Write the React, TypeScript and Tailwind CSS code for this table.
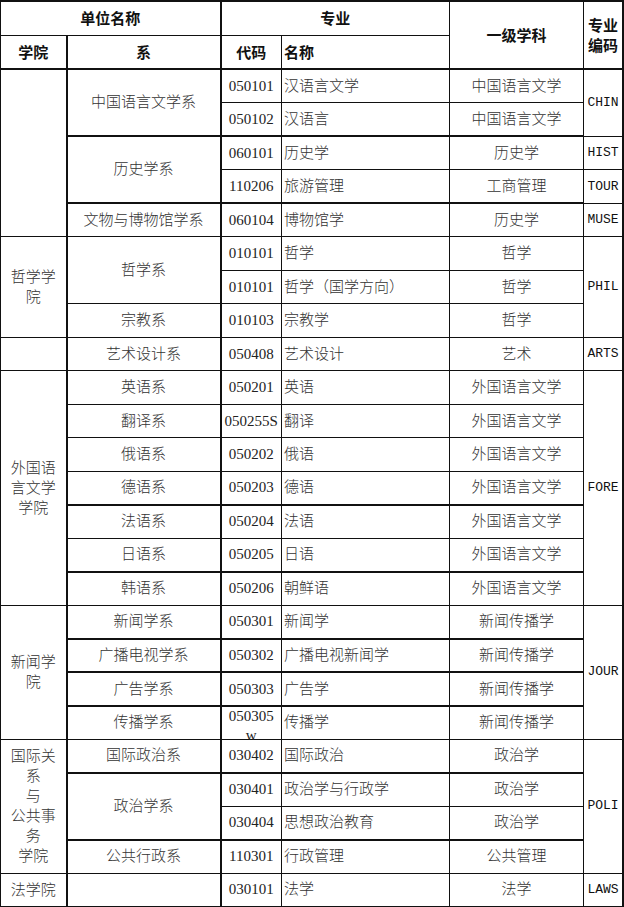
import React from 'react';
import clsx from 'clsx';

type Cell = { c: number; t?: React.ReactNode; rs?: number };

const br = (...lines: string[]) =>
  lines.map((l, i) => (
    <React.Fragment key={i}>
      {i > 0 && <br />}
      {l}
    </React.Fragment>
  ));

const rows: Cell[][] = [
  [{ c: 0, rs: 5 }, { c: 1, t: '中国语言文学系', rs: 2 }, { c: 2, t: '050101' }, { c: 3, t: '汉语言文学' }, { c: 4, t: '中国语言文学' }, { c: 5, t: 'CHIN', rs: 2 }],
  [{ c: 2, t: '050102' }, { c: 3, t: '汉语言' }, { c: 4, t: '中国语言文学' }],
  [{ c: 1, t: '历史学系', rs: 2 }, { c: 2, t: '060101' }, { c: 3, t: '历史学' }, { c: 4, t: '历史学' }, { c: 5, t: 'HIST' }],
  [{ c: 2, t: '110206' }, { c: 3, t: '旅游管理' }, { c: 4, t: '工商管理' }, { c: 5, t: 'TOUR' }],
  [{ c: 1, t: '文物与博物馆学系' }, { c: 2, t: '060104' }, { c: 3, t: '博物馆学' }, { c: 4, t: '历史学' }, { c: 5, t: 'MUSE' }],
  [{ c: 0, t: br('哲学学', '院'), rs: 3 }, { c: 1, t: '哲学系', rs: 2 }, { c: 2, t: '010101' }, { c: 3, t: '哲学' }, { c: 4, t: '哲学' }, { c: 5, t: 'PHIL', rs: 3 }],
  [{ c: 2, t: '010101' }, { c: 3, t: '哲学（国学方向）' }, { c: 4, t: '哲学' }],
  [{ c: 1, t: '宗教系' }, { c: 2, t: '010103' }, { c: 3, t: '宗教学' }, { c: 4, t: '哲学' }],
  [{ c: 0 }, { c: 1, t: '艺术设计系' }, { c: 2, t: '050408' }, { c: 3, t: '艺术设计' }, { c: 4, t: '艺术' }, { c: 5, t: 'ARTS' }],
  [{ c: 0, t: br('外国语', '言文学', '学院'), rs: 7 }, { c: 1, t: '英语系' }, { c: 2, t: '050201' }, { c: 3, t: '英语' }, { c: 4, t: '外国语言文学' }, { c: 5, t: 'FORE', rs: 7 }],
  [{ c: 1, t: '翻译系' }, { c: 2, t: '050255S' }, { c: 3, t: '翻译' }, { c: 4, t: '外国语言文学' }],
  [{ c: 1, t: '俄语系' }, { c: 2, t: '050202' }, { c: 3, t: '俄语' }, { c: 4, t: '外国语言文学' }],
  [{ c: 1, t: '德语系' }, { c: 2, t: '050203' }, { c: 3, t: '德语' }, { c: 4, t: '外国语言文学' }],
  [{ c: 1, t: '法语系' }, { c: 2, t: '050204' }, { c: 3, t: '法语' }, { c: 4, t: '外国语言文学' }],
  [{ c: 1, t: '日语系' }, { c: 2, t: '050205' }, { c: 3, t: '日语' }, { c: 4, t: '外国语言文学' }],
  [{ c: 1, t: '韩语系' }, { c: 2, t: '050206' }, { c: 3, t: '朝鲜语' }, { c: 4, t: '外国语言文学' }],
  [{ c: 0, t: br('新闻学', '院'), rs: 4 }, { c: 1, t: '新闻学系' }, { c: 2, t: '050301' }, { c: 3, t: '新闻学' }, { c: 4, t: '新闻传播学' }, { c: 5, t: 'JOUR', rs: 4 }],
  [{ c: 1, t: '广播电视学系' }, { c: 2, t: '050302' }, { c: 3, t: '广播电视新闻学' }, { c: 4, t: '新闻传播学' }],
  [{ c: 1, t: '广告学系' }, { c: 2, t: '050303' }, { c: 3, t: '广告学' }, { c: 4, t: '新闻传播学' }],
  [
    { c: 1, t: '传播学系' },
    { c: 2, t: <div className="h-[32px] leading-[19px] overflow-visible">050305<br />w</div> },
    { c: 3, t: '传播学' },
    { c: 4, t: '新闻传播学' },
  ],
  [{ c: 0, t: br('国际关', '系', '与', '公共事', '务', '学院'), rs: 4 }, { c: 1, t: '国际政治系' }, { c: 2, t: '030402' }, { c: 3, t: '国际政治' }, { c: 4, t: '政治学' }, { c: 5, t: 'POLI', rs: 4 }],
  [{ c: 1, t: '政治学系', rs: 2 }, { c: 2, t: '030401' }, { c: 3, t: '政治学与行政学' }, { c: 4, t: '政治学' }],
  [{ c: 2, t: '030404' }, { c: 3, t: '思想政治教育' }, { c: 4, t: '政治学' }],
  [{ c: 1, t: '公共行政系' }, { c: 2, t: '110301' }, { c: 3, t: '行政管理' }, { c: 4, t: '公共管理' }],
  [{ c: 0, t: '法学院' }, { c: 1 }, { c: 2, t: '030101' }, { c: 3, t: '法学' }, { c: 4, t: '法学' }, { c: 5, t: 'LAWS' }],
];

// rows whose top rule is drawn heavy (1-based)
const thick = new Set([1, 3, 5, 14, 16, 18, 19, 20, 22, 24]);

const base = 'border border-[#111] p-0 align-middle';
const head = "font-['Noto_Sans_CJK_SC',sans-serif] font-bold text-[15px] text-[#111]";

export default function App() {
  return (
    <div className="bg-white w-[624px] h-[907px]">
      <table className="w-[623px] table-fixed border-collapse font-['Liberation_Serif','Noto_Sans_CJK_SC',serif] text-[15px] text-[#333]">
        <colgroup>
          <col className="w-[66px]" />
          <col className="w-[154px]" />
          <col className="w-[61px]" />
          <col className="w-[168px]" />
          <col className="w-[134px]" />
          <col className="w-[40px]" />
        </colgroup>
        <thead>
          <tr className="h-[34px]">
            <th colSpan={2} className={clsx(base, head, 'border-t-2 text-center')}>单位名称</th>
            <th colSpan={2} className={clsx(base, head, 'border-t-2 border-l-2 text-center')}>专业</th>
            <th rowSpan={2} className={clsx(base, head, 'border-t-2 border-b-2 text-center')}>一级学科</th>
            <th rowSpan={2} className={clsx(base, head, 'border-t-2 border-r-[3px] border-b-2 text-center leading-5')}>专业<br />编码</th>
          </tr>
          <tr className="h-[34px]">
            <th className={clsx(base, head, 'border-b-2 text-center')}>学院</th>
            <th className={clsx(base, head, 'border-b-2 border-l-2 text-center')}>系</th>
            <th className={clsx(base, head, 'border-b-2 border-l-2 text-center')}>代码</th>
            <th className={clsx(base, head, 'border-b-2 text-left pl-[2px]')}>名称</th>
          </tr>
        </thead>
        <tbody>
          {rows.map((row, i) => {
            const n = i + 1;
            const last = n === rows.length;
            return (
              <tr key={n} className="h-[33.5px]">
                {row.map(cell => {
                  const { c } = cell;
                  return (
                    <td
                      key={c}
                      rowSpan={cell.rs}
                      className={clsx(
                        base,
                        thick.has(n) && c >= 1 && c <= 4 && 'border-t-2',
                        (c === 1 || c === 2) && 'border-l-2',
                        c === 5 && "border-r-[3px] text-center font-['Liberation_Mono',monospace] text-[13px] text-[#111]",
                        c === 0 && 'text-center leading-5 font-light',
                        c === 1 && 'text-center font-light',
                        c === 2 && 'text-center text-[#222]',
                        c === 3 && 'text-left pl-[2px] font-light',
                        c === 4 && 'text-center font-light',
                        (last || (cell.rs && n + cell.rs - 1 === rows.length)) && 'border-b-2',
                      )}
                    >
                      {cell.t}
                    </td>
                  );
                })}
              </tr>
            );
          })}
        </tbody>
      </table>
    </div>
  );
}
